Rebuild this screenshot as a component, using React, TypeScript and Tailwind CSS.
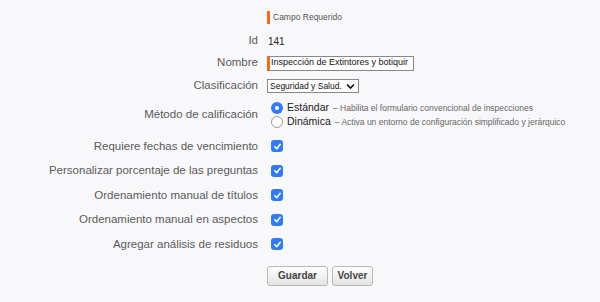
import React from 'react';

const Check: React.FC = () => (
  <span className="flex h-[12px] w-[12px] items-center justify-center rounded-[3px] bg-[#2f7cf6]">
    <svg width="9" height="9" viewBox="0 0 10 10">
      <path d="M2 5.3 L4.1 7.4 L8 2.6" fill="none" stroke="#fff" strokeWidth="1.8" strokeLinecap="round" strokeLinejoin="round" />
    </svg>
  </span>
);

const Radio: React.FC<{ on?: boolean }> = ({ on }) =>
  on ? (
    <span className="flex h-[12px] w-[12px] items-center justify-center rounded-full bg-[#2f7cf6]">
      <span className="h-[4px] w-[4px] rounded-full bg-white" />
    </span>
  ) : (
    <span className="h-[12px] w-[12px] rounded-full border border-[#9a9a9a] bg-white" />
  );

const Row: React.FC<{ label?: string; h: string; children: React.ReactNode }> = ({ label, h, children }) => (
  <div className={`grid grid-cols-[258px_1fr] gap-x-[9px] items-center ${h}`}>
    <div className="text-right text-[11.5px] text-[#5a5a5a]">{label}</div>
    <div className="flex items-center">{children}</div>
  </div>
);

const checks = [
  'Requiere fechas de vencimiento',
  'Personalizar porcentaje de las preguntas',
  'Ordenamiento manual de títulos',
  'Ordenamiento manual en aspectos',
  'Agregar análisis de residuos',
];

export default function App() {
  return (
    <div className="min-h-[302px] w-[600px] bg-[#f8f8fa] pt-[9px] font-['Liberation_Sans',Arial,sans-serif]">
      <Row h="h-[16px]">
        <span className="flex items-center text-[8.5px] text-[#555]">
          <span className="mr-[3px] h-[13px] w-[3px] bg-[#f26b1d]" />
          Campo Requerido
        </span>
      </Row>
      <Row label="Id" h="h-[22px] mt-[5px]">
        <span className="pl-[1px] text-[10px] text-[#222]">141</span>
      </Row>
      <Row label="Nombre" h="h-[22px]">
        <div className="flex h-[15px] w-[147px] items-center overflow-hidden whitespace-nowrap border border-[#888] border-l-[3px] border-l-[#f26b1d] bg-white pl-[1px] text-[9px] text-[#111]">
          Inspección de Extintores y botiquir
        </div>
      </Row>
      <Row label="Clasificación" h="h-[22px] mt-[1px]">
        <div className="flex h-[14px] w-[92px] items-center justify-between whitespace-nowrap border border-[#888] bg-white pl-[2px] pr-[3px] text-[8.5px] text-[#111]">
          <span>Seguridad y Salud.</span>
          <svg width="9" height="7" viewBox="0 0 10 7">
            <path d="M1.2 1.3 L5 5.2 L8.8 1.3" fill="none" stroke="#111" strokeWidth="1.8" />
          </svg>
        </div>
      </Row>
      <Row label="Método de calificación" h="h-[30px] mt-[3px]">
        <div className="flex flex-col pl-[4px]">
          <div className="flex h-[14px] items-center gap-[4px]">
            <Radio on />
            <span className="text-[10.5px] text-[#222]">Estándar</span>
            <span className="text-[8.5px] text-[#666]">– Habilita el formulario convencional de inspecciones</span>
          </div>
          <div className="flex h-[14px] items-center gap-[4px]">
            <Radio />
            <span className="text-[10.5px] text-[#222]">Dinámica</span>
            <span className="text-[8.5px] text-[#666]">– Activa un entorno de configuración simplificado y jerárquico</span>
          </div>
        </div>
      </Row>
      <div className="mt-[5px] flex flex-col gap-[2px]">
        {checks.map(c => (
          <Row key={c} label={c} h="h-[22.5px]">
            <span className="pl-[4px]">
              <Check />
            </span>
          </Row>
        ))}
      </div>
      <div className="mt-[10px] grid grid-cols-[258px_1fr] gap-x-[9px]">
        <div />
        <div className="flex gap-[4px]">
          <button className="h-[20px] w-[61px] rounded-[3px] border border-[#b8b8b8] bg-gradient-to-b from-white to-[#e4e4e4] text-[10px] font-bold text-[#444]">
            Guardar
          </button>
          <button className="h-[20px] w-[41px] rounded-[3px] border border-[#b8b8b8] bg-gradient-to-b from-white to-[#e4e4e4] text-[10px] font-bold text-[#444]">
            Volver
          </button>
        </div>
      </div>
    </div>
  );
}
